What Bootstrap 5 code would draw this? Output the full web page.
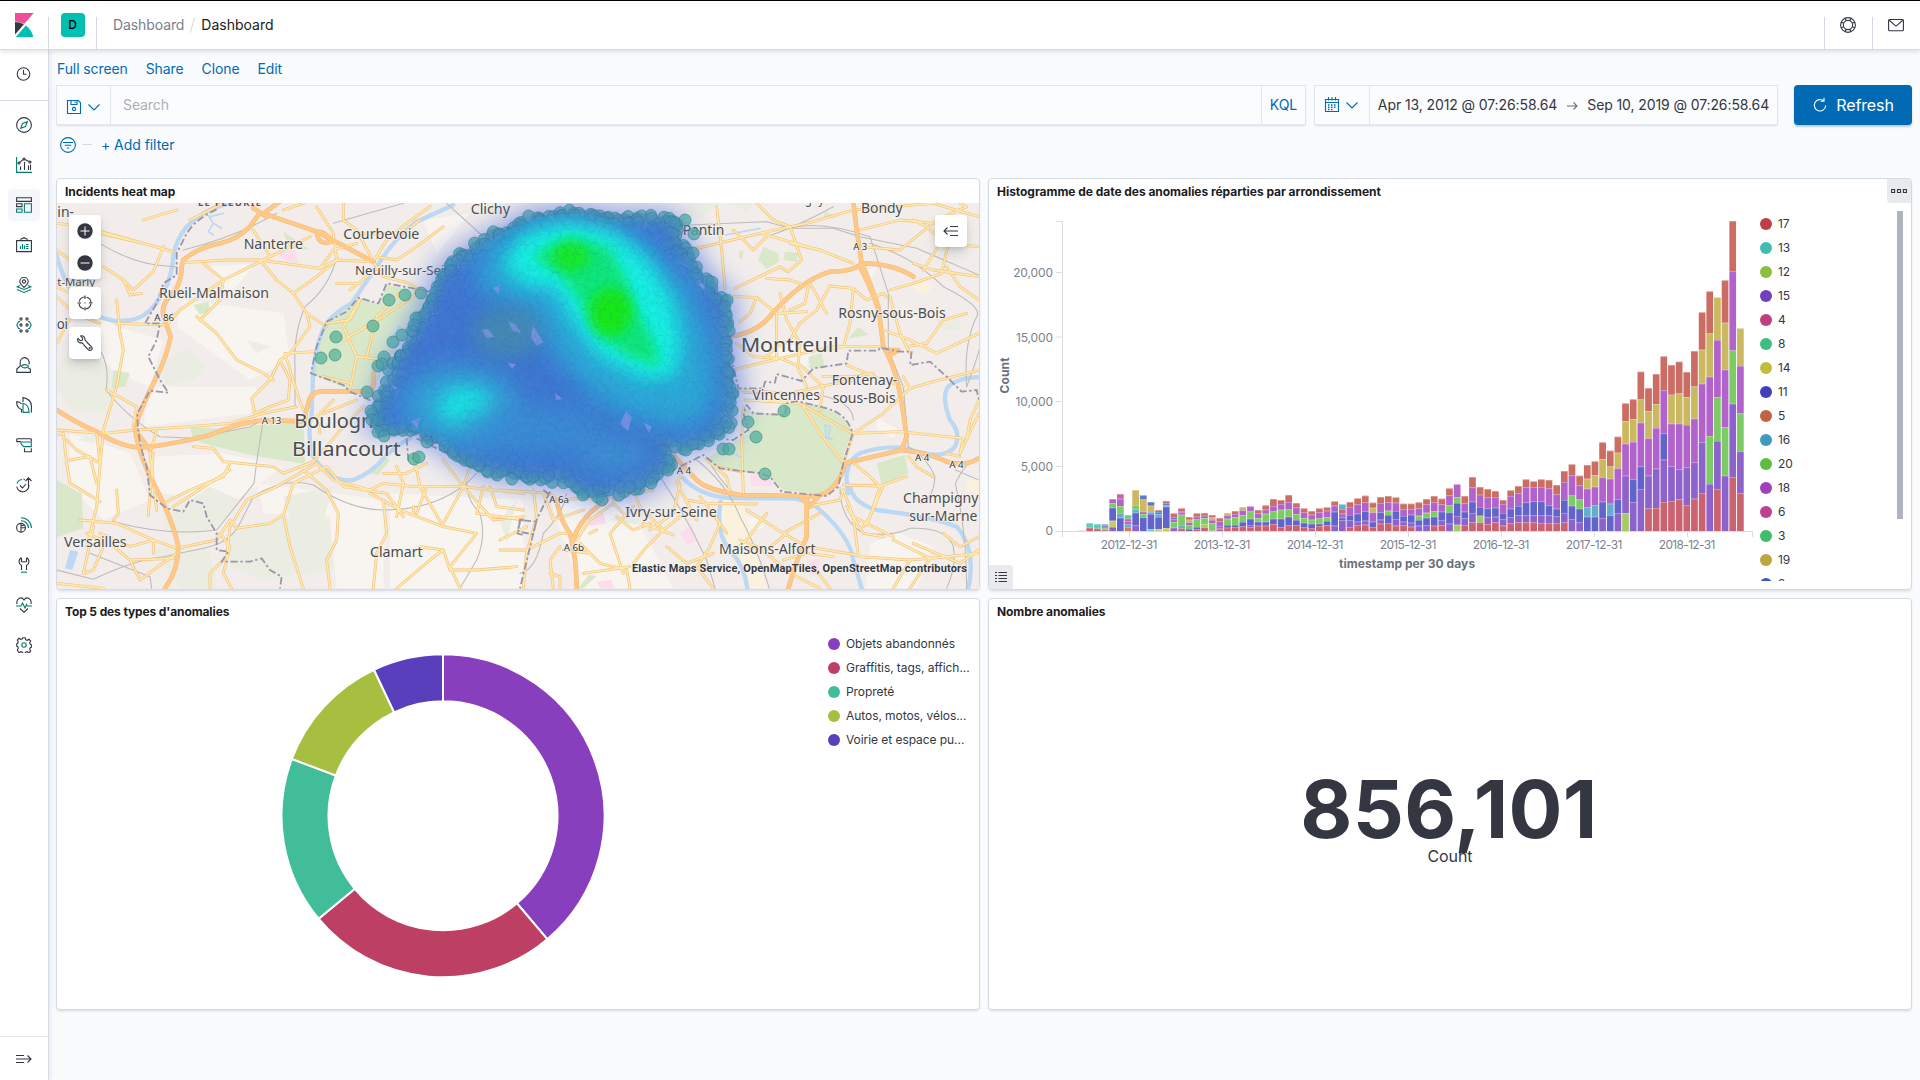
<!DOCTYPE html>
<html lang="en">
<head>
<meta charset="utf-8">
<title>Dashboard - Kibana</title>
<link href="https://cdn.jsdelivr.net/npm/bootstrap@5.3.0/dist/css/bootstrap.min.css" rel="stylesheet">
<style>
body{font-family:Inter,"Liberation Sans",sans-serif;font-size:14px;line-height:20px;color:#343741;background:#fafbfd;height:1080px;overflow:hidden;letter-spacing:-.1px}
a{text-decoration:none;color:#006bb4}
svg{display:block;flex:none}
.topbar{height:50px;border-top:1px solid #000;border-bottom:1px solid #d3dae6;box-shadow:0 2px 4px rgba(152,162,179,.28);z-index:3}
.topbar .cell{width:48px;height:48px;padding-bottom:1px}
.vline{width:1px;height:32px;background:#d3dae6;align-self:flex-end}
.avatar{width:24px;height:24px;border-radius:4px;background:#00bfb3;color:#000;font-size:12px;font-weight:500}
.crumb-sep{width:1px;height:16px;background:#d3dae6;transform:rotate(15deg);margin:0 8px}
.side{width:49px;border-right:1px solid #d3dae6;box-shadow:2px 0 5px rgba(152,162,179,.18);z-index:2}
.side-item{width:32px;height:32px;border-radius:4px}
.side .stack{padding-top:8px}
.side-item.current{background:#f5f7fa}
.ic{fill:none;stroke:#343741;stroke-width:1.1}
.ic .g{stroke:#017d73}
.blue{stroke:#006bb4}
.menu-row{height:38px;padding-left:1px;gap:18px}
.field{height:40px;background:#fbfcfd;border:1px solid #e1e5ee;box-shadow:0 2px 2px -1px rgba(152,162,179,.35)}
.field .sep{width:1px;background:#e3e7f0;align-self:stretch}
.refresh{width:118px;height:40px;background:#006bb4;border-radius:4px;font-size:16px;color:#fff;box-shadow:0 2px 2px rgba(54,97,126,.3)}
.filters{height:39px;padding:0 0 0 4px}
.panel{height:412px;border:1px solid #d3dae6;border-radius:4px;background:#fff;box-shadow:0 2px 3px -1px rgba(152,162,179,.4)}
.panel-name{height:24px;padding:0 8px;font-size:12px;font-weight:700;line-height:26px;color:#1a1c21;letter-spacing:-.08px}
.map-box{height:386px;overflow:hidden;border-radius:0 0 3px 3px}
.ctl{position:absolute;width:32px;background:#fff;border-radius:4px;box-shadow:0 6px 12px -1px rgba(65,78,101,.22),0 2px 4px -1px rgba(65,78,101,.2)}
.c-zoom{left:12px;top:12px;height:64px}.c-fit{left:12px;top:84px;height:32px}.c-tool{left:12px;top:124px;height:32px}.c-layer{right:12px;top:12px;height:32px}
.attrib{position:absolute;right:12px;bottom:11px;font-family:Roboto,Inter,sans-serif;font-size:11px;line-height:18px;font-weight:700;color:#343741;letter-spacing:.14px;text-shadow:0 0 2px #fff}
.corner{position:absolute;width:24px;height:24px;background:#e9eaed}
.c-menu{right:0;top:0;border-radius:0 3px 0 4px}.c-legend{left:0;bottom:0;border-radius:0 4px 0 3px}
.legend-list{font-size:12px;line-height:24px;letter-spacing:-.06px}
.dot{width:12px;height:12px;border-radius:50%;flex:none}
.hist-legend{width:130px;height:370px;overflow:hidden;margin-top:8px;padding-top:1px}
.scroller{width:6px;height:308px;background:#b0b4be;margin-top:8px}
.metric{font-size:80px;line-height:80px;padding-top:2px;margin-right:2px;font-weight:700;letter-spacing:.3px}
.metric-name{font-size:16px;line-height:20px;margin-top:-3px}
.tick{font:12px Inter,sans-serif;fill:#7b828f}
.axis-name{font:700 12px Inter,sans-serif;fill:#69707d}
.place{font-family:"Noto Sans",sans-serif;fill:#4a4c50;paint-order:stroke;stroke:#f7f3ee;stroke-width:5;stroke-linejoin:round}
</style>
<script src="https://cdn.jsdelivr.net/npm/bootstrap@5.3.0/dist/js/bootstrap.bundle.min.js"></script>
</head>
<body class="d-flex flex-column">
<header class="topbar bg-white d-flex align-items-center flex-shrink-0 position-relative">
  <div class="cell d-flex align-items-center justify-content-center">
    <svg width="24" height="24" viewBox="0 0 32 32"><path fill="#F04E98" d="M4 0v28.789L28.935.017z"/><path fill="#fff" d="M4 11.300c4.500 0 8.700 1.200 12.500 3.300L4 29z"/><path fill="#343741" d="M4 12v16.789l11.906-13.738A24.721 24.721 0 004 12"/><path fill="#00BFB3" d="M18.479 16.664L6.268 30.754l-1.073 1.237h23.191c-1.252-6.292-4.883-11.719-9.908-15.327"/></svg>
  </div>
  <span class="vline"></span>
  <div class="cell d-flex align-items-center justify-content-center" style="width:47px"><span class="avatar d-flex align-items-center justify-content-center">D</span></div>
  <span class="vline"></span>
  <nav class="d-flex align-items-center flex-grow-1 ps-3"><span style="color:#7a808c">Dashboard</span><span class="crumb-sep"></span><span style="color:#1a1c21;letter-spacing:0">Dashboard</span></nav>
  <span class="vline"></span>
  <div class="cell d-flex align-items-center justify-content-center" style="width:47px;padding-right:2px">
    <svg class="ic" width="16" height="16" viewBox="0 0 16 16"><circle cx="8" cy="8" r="7.400"/><circle cx="8" cy="8" r="4.600"/><path d="M5.200 1.200l1 2.600M10.800 1.200l-1 2.600M5.200 14.800l1-2.600M10.800 14.800l-1-2.600M1.200 5.200l2.600 1M1.200 10.800l2.600-1M14.800 5.200l-2.600 1M14.800 10.800l-2.600-1"/></svg>
  </div>
  <span class="vline"></span>
  <div class="cell d-flex align-items-center justify-content-center" style="width:47px;padding-right:2px">
    <svg class="ic" width="16" height="16" viewBox="0 0 16 16"><rect x=".6" y="2.500" width="14.800" height="11.200" rx="1"/><path d="M1 3l6 5.400a1.500 1.500 0 002 0L15 3"/></svg>
  </div>
</header>
<div class="d-flex flex-grow-1" style="min-height:0">
<aside class="side bg-white d-flex flex-column align-items-center flex-shrink-0 position-relative">
  <div class="side-item d-flex align-items-center justify-content-center" style="margin-top:8px"><svg class="ic" width="16" height="16" viewBox="0 0 16 16"><circle cx="7.500" cy="8" r="6.300"/><path d="M7.500 3.800v4.400h3"/></svg></div>
  <div class="w-100 border-bottom" style="height:11px;border-color:#d3dae6!important"></div>
  <div class="stack d-flex flex-column gap-2" id="apps"></div>
  <div class="mt-auto w-100 d-flex align-items-center justify-content-center border-top" style="height:44px;border-color:#e4e8f0!important"><svg class="ic" width="16" height="16" viewBox="0 0 16 16"><path d="M0 4.500h8M0 8h14.500M0 11.500h8M11.500 4.500L15 8l-3.500 3.500"/></svg></div>
</aside>
<main class="flex-grow-1" style="padding:0 8px 0 7px;min-width:0">
  <div class="menu-row d-flex align-items-center" style="margin-bottom:-3px"><a href="#">Full screen</a><a href="#">Share</a><a href="#">Clone</a><a href="#">Edit</a></div>
  <div class="d-flex">
    <div class="field d-flex align-items-center" style="width:1250px">
      <div class="d-flex align-items-center ps-2" style="width:53px"><svg class="ic blue" style="margin:3px 5px 0 1px" width="16" height="16" viewBox="0 0 16 16"><path d="M1.500 1.500h10.800l2.200 2.200v10.800h-13zM5 1.500v4h6v-4M9 2.500v1.500"/><circle cx="8" cy="10" r="1.600"/></svg><svg class="ic blue" style="margin-top:3px" width="14" height="14" viewBox="0 0 14 14"><path d="M1.500 4.500L7 10l5.500-5.500"/></svg></div>
      <span class="sep"></span><span class="flex-grow-1" style="padding-left:12px;color:#abb0ba">Search</span>
      <span class="sep"></span><a href="#" class="text-center" style="width:43px">KQL</a>
    </div>
    <div class="field d-flex align-items-center ms-2" style="width:464px">
      <div class="d-flex align-items-center" style="width:54px;padding-left:9px"><svg class="ic blue" style="margin-right:5px" width="16" height="16" viewBox="0 0 16 16"><path d="M1.500 2.500h13v12h-13zM1.500 5.500h13M4.500 0v3.500M8 0v3.500M11.500 0v3.500"/><path stroke-width="1.400" stroke-dasharray="1.500 1.500" d="M4 8h8.500M4 10.300h8.500M4 12.500h6"/></svg><svg class="ic blue" width="14" height="14" viewBox="0 0 14 14"><path d="M1.500 4.500L7 10l5.500-5.500"/></svg></div>
      <span class="sep"></span>
      <div class="d-flex flex-grow-1 align-items-center justify-content-center"><span>Apr 13, 2012 @ 07:26:58.64</span><svg class="ic" style="stroke:#69707d;margin:2px 9px 0" width="12" height="12" viewBox="0 0 12 12"><path d="M1 6h10M7.500 2.500L11 6 7.500 9.500"/></svg><span>Sep 10, 2019 @ 07:26:58.64</span></div>
    </div>
    <a href="#" class="refresh d-flex align-items-center justify-content-center ms-3"><svg class="ic me-2" style="stroke:#fff" width="16" height="16" viewBox="0 0 16 16"><path d="M11.800 4A5.700 5.700 0 1013.700 8.500M12 .8V4.200H8.600"/></svg>Refresh</a>
  </div>
  <div class="filters d-flex align-items-center" style="margin-bottom:14px"><svg class="ic blue" width="16" height="16" viewBox="0 0 16 16"><circle cx="8" cy="8" r="7.400"/><path d="M3 5.500h10M4.800 8.200h6.400M6.800 11h2.400"/></svg><span style="width:10px;height:1px;background:#d3dae6;margin:0 9px 0 6px"></span><a href="#" style="letter-spacing:-.05px">+ Add filter</a></div>

  <div class="row g-2">
    <div class="col-6"><section class="panel">
      <div class="panel-name">Incidents heat map</div>
      <div class="map-box position-relative">
        <svg id="map" width="922" height="386" viewBox="57 203 922 386"></svg>
        <div class="ctl c-zoom d-flex flex-column align-items-center justify-content-around"><svg width="16" height="16" viewBox="0 0 16 16"><circle cx="8" cy="8" r="7.700" fill="#343741"/><path stroke="#fff" d="M3.500 8h9M8 3.500v9"/></svg><svg width="16" height="16" viewBox="0 0 16 16"><circle cx="8" cy="8" r="7.700" fill="#343741"/><path stroke="#fff" d="M3.500 8h9"/></svg></div>
        <div class="ctl c-fit d-flex align-items-center justify-content-center"><svg class="ic" width="16" height="16" viewBox="0 0 16 16"><circle cx="8" cy="8" r="6" stroke-dasharray="7.400 2" stroke-dashoffset="-1"/><path d="M8 .5v3.500M8 12v3.500M.5 8H4M12 8h3.500"/><path d="M7.500 8h1"/></svg></div>
        <div class="ctl c-tool d-flex align-items-center justify-content-center"><svg class="ic" width="16" height="16" viewBox="0 0 16 16"><path d="M3.400.9l2.300 2.300-.5 2-2 .5L.9 3.400C0 6 2 8.400 4.700 7.700l2.300 2M7.700 4.700C8.400 2.500 6.300 0 3.400.9M7.700 4.700l2 2.300"/><path d="M9.700 7l4.800 4.800a2.100 2.100 0 01-3 3L6.800 10"/><circle cx="12.700" cy="13" r=".5"/></svg></div>
        <div class="ctl c-layer d-flex align-items-center justify-content-center"><svg class="ic" width="16" height="16" viewBox="0 0 16 16"><path d="M7 3.500h8M1 8h14M7 12.500h8M4.500 4.500L1 8l3.500 3.500"/></svg></div>
        <div class="attrib">Elastic Maps Service, OpenMapTiles, OpenStreetMap contributors</div>
      </div>
    </section></div>
    <div class="col-6"><section class="panel position-relative">
      <div class="panel-name" style="letter-spacing:-.04px">Histogramme de date des anomalies réparties par arrondissement</div>
      <div class="d-flex">
        <svg id="hist" width="771" height="386" viewBox="989 203 771 386"></svg>
        <div class="hist-legend legend-list" id="histLegend"></div>
        <div class="scroller" style="margin-left:7px"></div>
      </div>
      <div class="corner c-menu d-flex align-items-center justify-content-center"><svg class="ic" width="16" height="16" viewBox="0 0 16 16"><path d="M.6 6.500h3v3h-3zM6.500 6.500h3v3h-3zM12.400 6.500h3v3h-3z"/></svg></div>
      <div class="corner c-legend d-flex align-items-center justify-content-center"><svg class="ic" width="14" height="14" viewBox="0 0 14 14"><path d="M1 2.500h2M4.500 2.500H13M1 5.500h2M4.500 5.500H13M1 8.500h2M4.500 8.500H13M1 11.500h2M4.500 11.500H13"/></svg></div>
    </section></div>
    <div class="col-6"><section class="panel">
      <div class="panel-name" style="letter-spacing:-.12px">Top 5 des types d'anomalies</div>
      <div class="d-flex">
        <svg id="donut" width="771" height="386" viewBox="57 623 771 386"></svg>
        <div class="legend-list" id="pieLegend" style="margin-top:9px"></div>
      </div>
    </section></div>
    <div class="col-6"><section class="panel">
      <div class="panel-name">Nombre anomalies</div>
      <div class="d-flex flex-column align-items-center justify-content-center" style="height:386px"><div class="metric">856,101</div><div class="metric-name">Count</div></div>
    </section></div>
  </div>
</main>
</div>
<script>
/* ---- sidebar application icons ---- */
const apps=[
'<circle cx="8" cy="8" r="7.400"/><path class="g" d="M11.300 4.700L9.500 9.500 4.700 11.300 6.500 6.500zM8 8l.1.100"/>',
'<path class="g" d="M.6 0v15.400H16"/><path d="M4.500 13V9.500M8.500 13V5M12.500 13V8.500M14.500 13V7.500M3.800 5.400L7 2.700M9 2.600l4 2"/><circle cx="3" cy="6" r="1"/><circle cx="8" cy="2" r="1"/><circle cx="14" cy="5" r="1"/>',
'<path d="M.6.8h14.800v3.600H.6zM.6 6.800h5.400v2.800H.6z"/><path class="g" d="M.6 12h5.400v3.200H.6zM8.400 6.800h7v8.400h-7z"/>',
'<path d="M.6 3.600h14.800v11H.6zM5 3.500V2l3-1.300L11 2v1.500"/><path class="g" d="M4.500 12V9M6.500 12V7M8.500 12V8.500M10 7.500h2.500M10 9.500h2.500M10 11.500h2.500"/>',
'<path d="M8 10.500C5.500 8 3.800 6.500 3.800 4.500a4.200 4.200 0 018.400 0c0 2-1.700 3.500-4.200 6z"/><circle cx="8" cy="4.500" r="1.600"/><path class="g" d="M4 8.500L1 9.800l7 2.700 7-2.700-3-1.300M1 12.600l7 2.800 7-2.800"/>',
'<circle cx="5" cy="2" r="1.100"/><circle cx="11" cy="2" r="1.100"/><circle cx="5" cy="8" r="1.100"/><circle cx="11" cy="8" r="1.100"/><circle cx="5" cy="14" r="1.100"/><circle cx="11" cy="14" r="1.100"/><path class="g" d="M4 4.500H2.500L.8 8l1.700 3.500H4M12 4.500h1.500L15.200 8l-1.700 3.500H12"/>',
'<path d="M13 7.500C14 3 11 .6 8.500.6S3.700 3 4.200 6.500V9L.8 12v3.400h13.600v-3.200l-2.200-1.400"/><path class="g" d="M5.500 9.500C6 7 11 7 12.500 9.300 11 11.300 7 11.500 5.500 9.500z"/>',
'<path d="M.6 4.600c2.500 0 4 1 5 2.400M.6 4.600C.6 9 2 11.500 5.500 12.500v3M7 5V.6c5 1 8.400 3.400 8.400 8.400v6.400"/><path class="g" d="M7 6.200c4 1 6 4 6 9.200H7z"/>',
'<path d="M.8 1.800h14.500M.8 1.800v2.800h4M15.300 1.800v2.800M8.500 11.200v3.500h6.800v-3.500"/><path class="g" d="M5 5h10.300v4.600H7.800L5 6.800z"/>',
'<path d="M12.500 1v10.500M9.500 4L12.500.8 15.500 4M12.800 8a6 6 0 01-12 1.500M4 8.500l2.500 2.500 3.500-4"/><path class="g" d="M1 6.500a6 6 0 015-4M7.500 2.400l1.500.2"/>',
'<circle cx="5" cy="10.800" r="4.400"/><path d="M5 6.400v8.800M5 10.800h4.300M5 8.500h3.600"/><path class="g" d="M5 .7A10.300 10.300 0 0115.400 11M5 3.700A7.300 7.300 0 0112.500 11"/>',
'<path d="M5.500.8C2 2.500 2.500 7 5.500 8.500V13M10.500.8C14 2.500 13.500 7 10.500 8.500V13M5.500.8v4h5v-4"/><path class="g" d="M5 15.200h6"/>',
'<path d="M1 7C-.2 1.500 5.500-1 8 3c2.500-4 8.200-1.500 7 4M4 11.500l4 3.700 4-3.700"/><path class="g" d="M0 9h5l1.500-3 2.500 5 1.500-3.500.8 1.500H16"/>',
'<path d="M6.800.7h2.400l.5 2 1.500.6 1.800-1 1.700 1.700-1 1.800.6 1.500 1.100.5v2.400l-1.100.5-.6 1.500 1 1.800-1.700 1.700-1.800-1-1.500.6-.5 1H6.800l-.5-1-1.500-.6-1.800 1L1.300 13l1-1.800-.6-1.500-1-.5V6.800l1-.5.6-1.500-1-1.800L3 1.300l1.800 1 1.500-.6z"/><circle class="g" cx="8" cy="8" r="2.200"/>'];
document.getElementById('apps').innerHTML=apps.map((p,i)=>`<div class="side-item d-flex align-items-center justify-content-center${i==2?' current':''}"><svg class="ic" width="16" height="16" viewBox="0 0 16 16">${p}</svg></div>`).join('');

/* ---- legends ---- */
const legendRow=(c,t)=>`<div class="d-flex align-items-center"><span class="dot" style="background:${c};margin-right:6px"></span>${t}</div>`;
document.getElementById('histLegend').innerHTML=[['#bd4049',17],['#40bdb0',13],['#8cbf40',12],['#7040bd',15],['#bd407c',4],['#40bd80',8],['#bdbd40',14],['#4040bd',11],['#bd6440',5],['#409abd',16],['#5dbd40',20],['#9f40bd',18],['#bd4093',6],['#40bd68',3],['#bda540',19],['#4058bd',2]].map(x=>legendRow(...x)).join('');
document.getElementById('pieLegend').innerHTML=[['#883fbd','Objets abandonnés'],['#bd4064','Graffitis, tags, affich...'],['#41be99','Propreté'],['#a6bf40','Autos, motos, vélos...'],['#5a3fbd','Voirie et espace pu...']].map(x=>legendRow(...x)).join('');

/* ---- stacked histogram, segment heights in thirds of a pixel ---- */
const pal={r:'#cb6270',o:'#cb6d63',y:'#cbb962',Y:'#cbcb62',p:'#8c62cb',b:'#6264cb',m:'#b162cb',g:'#7dcb65',t:'#62cbbb',c:'#62aecb',n:'#cb8062',k:'#cb62a6',e:'#62cb8c',B:'#6275cb',L:'#a4cb62',x:'#dedcd8'};
const bars=`x3|r10t14|r7t14|r4g6p6c5|p12Y19b39g14m12|b40c14g21m22k14|n12c8m9k8e11|p17b38c10g13y45|b41g10m7y37B12|t6b45c6y19B11|Y6b36c9B6o6|Y9b64c5B5o7|p10g17m8B6o12|r8c10g31m7k4o8|b6g12m8y8o8|r6b6g23m8o10|r11L10g18m7o8|r2g22m9y8o7|p5r4b4m16o10|r10b8g19m10y7|r12b6g24m9o9|r14b13g21m14y10|r12p6b19g22m15|r16b12g11m14o10|r16b12g24m12o13|r21b16g22m16o21|r12b25g27m17o12|r17b26g22m22o21|r18b15g18m20o13|r12b13g14m17o12|r8b14g12m15o11|r15b7g16m18o12|r17b13g12m19o10|p16b42m18o13|p32b8m12o14c14|r12p20b16m24o15|r18p10b24m28o18|r19p12b28m27o20|r12b16m28y14o15|r22p12b22m28o18|r24b24g13m25o19|r16p20b24m25o16|r17p11b17m20o17|r13p12b24m17o16|p16b17g13m22o18|p17b23g15m25o16|r16b27g17m26o19|r17p15b26m22o17|p22b34g21m30o21|L19p26b39g18m38|r18p20b20m25o22|r26p28b34m43o31|r26L20b26m37o23|r21p21b26m33o25|r26p17b27m32o18|r16p19b19m27o12|r23p18b26m38o17|r26p21b28m38o22|r26p21b39m45o24|r26p21b42m43o17|r24p23b42m43o23|r24p23b30m51o25|r24p20b23m43o28|r26p28b39m54o33|p35b41g31m60o33|p26b41g28m42o29|b43c29m55y30o41|b43c35m55y35o41|p39b49m73y55o50|b47c35m75y37o47|p53b42m93y47o48|L54p112m96y68o53|p86b69m112y69o59|p126b68m131y70o83|r68p98m112y82o69|r69p118m122y72o90|r87p127b79m129o102|r90p104m128y87o89|r95p90m137y91o95|r77p114m127y84o75|r97p109m131y97o106|r114p152m176y102o112|p141g144m178y130o126|r126p144g132m171y128|p166g146m172y141o127|r162p220g160m237o151|r113p126g114m142y113`.split('|');
let h='';
bars.forEach((s,i)=>{let y=531,x=1078.7+7.655*i;
  for(const [,c,v] of s.matchAll(/([a-zA-Z])(\d+)/g)){const hh=v/3;y-=hh;h+=`<rect x="${x.toFixed(2)}" y="${y.toFixed(2)}" width="6.700" height="${hh.toFixed(2)}" fill="${pal[c]}"/><rect x="${(x-.3).toFixed(2)}" y="${y.toFixed(2)}" width="7.300" height=".8" fill="#fff" opacity=".35"/>`}});
h+='<path d="M1056 221.500h6.500V537M1056 272.500h6.500M1056 337h6.500M1056 401.500h6.500M1056 466.500h6.500M1056 531.500h696.500V537" fill="none" stroke="#dcdcdc"/>';
[[272.500,'20,000'],[337.300,'15,000'],[401.300,'10,000'],[466.300,'5,000'],[530.500,'0']].forEach(([y,t])=>h+=`<text class="tick" x="1053" y="${y+4.300}" text-anchor="end">${t}</text>`);
for(let k=0;k<7;k++){const x=1129.5+93*k;h+=`<path d="M${x} 531v6" stroke="#dcdcdc"/><text class="tick" x="${x-.5}" y="548.600" text-anchor="middle" textLength="56.500">${2012+k}-12-31</text>`}
h+='<text class="axis-name" x="1407" y="568" text-anchor="middle" textLength="136">timestamp per 30 days</text><text class="axis-name" transform="translate(1009 375.500) rotate(-90)" text-anchor="middle" textLength="36">Count</text>';
document.getElementById('hist').innerHTML=h;

/* ---- donut ---- */
const cuts=[0,139.8,230.4,290.6,334.7,360],pc=['#883fbd','#bd4064','#41be99','#a6bf40','#5a3fbd'];
const pt=(a,r)=>{a=a*Math.PI/180;return (443+r*Math.sin(a)).toFixed(2)+' '+(815.8-r*Math.cos(a)).toFixed(2)};
document.getElementById('donut').innerHTML=pc.map((c,i)=>`<path fill="${c}" stroke="#fff" stroke-width="2" d="M${pt(cuts[i],161.5)}A161.500 161.500 0 0 1 ${pt(cuts[i+1],161.5)}L${pt(cuts[i+1],114.5)}A114.500 114.500 0 0 0 ${pt(cuts[i],114.5)}Z"/>`).join('');

/* ---- map: west and east sheets share a scale of three units per pixel ---- */
let seed=7;const rnd=()=>(seed=(seed*16807)%2147483647)/2147483647;
const west={
 pale:['M60 300L200 380 340 420 300 560 200 520 60 420Z','M400 300L700 340 720 480 600 540 380 380Z','M300 560L620 560 600 640 280 680Z','M60 700L240 760 300 900 160 960 60 860Z','M300 770L520 760 700 800 560 900 320 880Z','M620 850L1000 900 1000 1165 860 1165 840 950 640 940Z','M1020 880L1420 900 1420 1165 1020 1165Z','M1120 60L1260 40 1160 160Z','M470 200L620 190 540 280Z'],
 moss:['M335 490L410 445 465 500 430 540 345 555Z','M20 500L80 430 180 500 200 560 160 640 60 630 20 560Z','M540 1000L700 960 840 960 850 1110 640 1140 540 1100Z','M340 950L480 860 570 900 500 980 400 1010 340 990Z','M300 1040L480 1050 500 1165 390 1165Z','M700 890L850 860 820 960 720 960Z','M80 720L150 700 130 730Z','M590 420L660 440 620 460Z'],
 park:['M1010 255L1120 275 1140 330 1060 420 1000 500 965 595 900 570 790 525 795 460 830 370 925 295 985 312Z','M420 680L560 690 650 670 760 665 765 792 600 765 480 735 430 720Z','M20 840L95 880 100 985 20 1012Z','M190 510L240 520 225 560 185 565Z','M430 315L475 305 480 330 450 345Z','M700 95L780 150 715 140Z','M950 820L1000 770 1020 780 985 825Z'],
 pink:['M680 155L735 150 745 190 700 180Z'],
 lake:['M60 1050l25 5-18 55-22-5zM1010 440l35-65 10 5-35 60z'],
 water:['M545 10Q470 20 410 80 370 130 368 190 360 260 310 320 270 370 190 362 100 345 60 270 30 210 15 150','M1210 15L1100 65Q1040 110 1000 170L905 310Q830 350 815 400 790 460 788 560L785 640Q770 700 790 770 840 850 910 840 970 815 1000 775 1040 735 1080 715'],
 creek:['M470 40L490 70 475 95 490 105M490 70L515 85M480 50L520 40'],
 rail:['M150 130Q260 200 380 200','M20 1110L130 1138Q250 1080 340 1070L460 1045Q540 1030 570 970L610 890Q700 830 790 855 900 930 1000 930 1180 930 1280 820','M150 450Q180 500 168 570 240 660 330 710L430 715 600 680 640 660M640 660Q620 780 612 850 540 940 500 990 360 1010 190 965','M860 170Q840 260 765 320 730 400 735 500L735 620','M400 150Q560 110 680 40','M1190 10L1300 110 1420 200','M850 70L1060 10M1290 940Q1310 1010 1280 1080L1230 1165M1250 850Q1250 900 1290 940M120 1060L300 1130 305 1165'],
 hw:['M690 5L640 40 800 95 970 185','M625 45L600 80Q560 120 510 130 440 145 400 180L395 200Q395 260 350 300 330 330 345 360L362 410Q350 470 320 530 275 620 255 680 260 740 300 830 370 960 385 1040 385 1110 345 1165','M610 25L650 50M800 95Q805 140 845 125 830 95 800 95','M20 630Q80 670 140 695 220 745 280 742 360 735 480 705 560 670 640 660L765 664Q765 640 775 610 780 580 810 574L960 574Q975 560 970 520','M255 690L300 750'],
 st:['M20 70L100 80 370 155M150 100L280 130 370 155','M400 188L530 180 630 180 810 205 860 180 960 185','M390 330L520 240 640 180 700 150 780 110','M450 360L510 300 520 240 460 190','M630 180L680 240 730 280 770 340 780 380 720 460 690 480 660 540 605 595 615 640','M440 350L500 400 560 480 640 520 670 540','M20 690L160 700 260 690 420 680 540 670 640 640 740 620','M690 480L720 540 715 600 660 620 615 640M705 460L745 590 760 630','M710 460L790 455M730 280L800 230 860 180 850 100 800 20','M200 370L350 375 390 330M200 300L210 400 220 450 200 560 160 690 150 800 140 920 110 1040','M160 200L220 240 250 270 310 215 340 140M220 240L240 285 275 280','M170 570L260 620 250 680M20 290L70 340 150 370M20 430L80 320','M20 705L40 700 50 790 60 850 150 905M50 720L80 750 150 790 140 700 M60 780L120 770 140 850','M90 960L200 970 310 1020 380 1045 500 1020 540 960 560 985 660 970 700 945 730 850 830 800','M320 930L300 760 320 690M295 945L310 760M200 870L205 940 190 960','M340 910L420 870 520 830 540 790M430 740L490 745 520 785 670 800 700 820 790 785','M370 920L540 810M545 1165L520 1120 540 1040 510 1000','M700 945L720 1040 760 1165M480 1165L480 1120 530 1070 540 980M540 980L590 900 680 860 800 790','M760 810L830 870 865 940 860 1020 830 1080 840 1165M830 800L880 860 1010 880 1060 950M1000 900L1010 1000 980 1060 970 1165','M800 790L850 840 960 870 1000 850 1090 860 1240 860 1420 880','M830 370L900 360 930 300 880 380 920 470 900 570M1110 275L1000 350 880 420M1050 280L980 350 950 470M820 530L900 550M920 470L1010 480','M940 620L880 680 830 740 790 785M960 580L1000 620 1010 660M850 600L800 650 810 700M820 640L920 600','M970 185L1010 120 1070 70 1140 20M970 185L1000 230 1080 250 1150 300M970 185L920 90 880 60 880 10M930 100L1060 100 1110 60M980 170L1040 180 1100 140 1180 80','M900 270L950 230 990 200M770 340L830 380M860 250L930 250M810 205L850 150 920 130','M1040 800L1060 850 1040 950M1090 760L1110 860 1180 980M1000 820L1070 820 1130 790M1130 860L1100 940M1180 780L1240 860 1180 970M1260 800L1240 860 1330 960 1420 950M1300 860L1280 940 1420 960','M960 880L1050 930 1180 980 1280 1000 1200 1100 1230 1165M1040 1165L1140 1080 1180 1050 1110 1040M1180 1050L1200 1110 1280 1110 1400 1100M1320 860L1340 920 1420 930M1090 920v25','M20 1150L160 1165M130 980L100 1120 130 1110 160 1040 200 1020M110 1000L180 1030 240 1080 370 1075M240 1080L270 1140 380 1060M150 1000L240 1040 310 1020 310 1060','M20 150L60 180M20 260L60 280M380 30L280 60M520 10L420 60M610 90L660 170M700 30L760 10'],
 edge:['M500 28Q430 60 405 110L380 160V225L340 250 320 310 285 370H330L320 420 295 470 330 540 355 578 300 572 262 640Q262 720 290 800L300 885 350 925 400 935 420 900 460 910 470 950 500 1000V1050L535 1055 515 1085H600L635 1075 660 1110 695 1130 690 1165','M1140 275L1010 250 985 310 925 293 890 335 830 365 800 440 783 520 880 555 900 575 970 605','M1070 715L1075 780 1100 770M1100 715L1160 745 1250 790 1420 840','M1420 960H1410L1402 1000 1420 1005']
};
const east={
 pale:['M150 900L380 900 520 1165 240 1165Z','M800 430L940 440 920 500 800 480Z','M1130 650L1195 690 1180 715 1130 690Z','M1130 200L1100 265 1080 220Z','M0 950L60 900 60 1165 0 1165Z','M740 950L790 960 790 985 750 990Z','M1110 1030L1200 1000 1300 1040 1250 1165 1100 1165Z','M860 615L900 620 890 655 855 650Z'],
 moss:['M560 10L660 10 600 60 570 45Z','M1305 360L1375 340 1385 390 1330 390Z','M0 960L50 900 20 1030Z','M330 960L410 930 420 975Z','M680 10L760 10 740 35Z'],
 park:['M730 620L760 640 850 640 870 603 940 612Q1040 640 1058 700 1020 780 1030 790L1010 860 960 885 850 870 800 820 670 810 620 775 745 700Z','M1130 790L1215 765 1225 820 1145 855Z','M925 470L965 460 975 505 930 505Z','M1045 415L1075 382 1107 405Z','M790 140L835 160 838 185 800 207 775 180Z','M855 155L895 158 890 185 850 180Z','M265 1125L290 1128 250 1165 235 1165Z','M975 35L1000 45 1000 55 970 50Z','M720 150l12 5-8 25-8-10z'],
 pink:['M750 825L805 820 820 858 755 858Z','M262 955L310 940 318 970 270 978Z','M540 1000L575 975 592 1025 560 1035Z','M290 1145L335 1140 342 1165 300 1165Z','M925 1085L960 1075 955 1115 930 1130Z'],
 sand:['M670 900L725 895 800 1165 745 1165 700 1060 660 980Z','M1235 260L1265 235 1300 260 1270 285Z','M1400 840L1437 835V880L1400 875Z','M1210 320L1240 330 1250 365 1200 350Z'],
 water:['M550 835Q600 890 700 895L860 895Q925 895 960 930 1050 1010 1060 1080L1085 1165','M662 905Q645 1000 690 1050 735 1100 742 1165','M1045 880Q1025 790 1080 760 1150 735 1220 745 1330 785 1365 740 1385 700 1350 660 1320 580 1350 555 1390 530 1437 532','M1050 860Q1060 910 1130 930 1300 950 1370 980 1430 1050 1405 1165'],
 creek:['M675 105L780 85M975 675l15 5-5 30 12 8-18-3z M690 755l30 15'],
 rail:['M570 75L800 65 870 85H1000L1080 110 1250 145 1437 225','M870 85Q960 60 1110 110L1165 280 1165 450 1210 560 1225 740Q1280 770 1305 830 1300 900 1260 910','M480 830Q560 950 620 1080L645 1165M590 780Q680 850 720 950 770 1040 808 1165M620 770Q650 830 700 880','M1110 130Q1240 170 1330 260 1450 320 1430 350 1390 430 1400 560','M730 580H930Q1060 600 1060 660','M1020 860Q1020 960 1090 1000 1180 1010 1230 985 1340 980 1360 1040 1370 1100 1340 1165M1400 560Q1430 480 1437 450','M200 880Q190 940 130 1000 110 1110 60 1120M1366 850Q1400 780 1437 770M1366 850Q1400 1000 1400 1165M1000 20Q890 80 800 110M1366 810L1437 840'],
 hw:['M1060 5L1070 90 1085 190Q1100 220 1135 320L1150 440Q1190 500 1210 640L1220 710 1205 750Q1120 770 1035 790 1025 840 990 870 960 895 900 888L720 885Q620 870 590 840L500 745','M690 410Q760 400 800 360 900 240 990 215 1060 215 1085 190 1180 190 1240 230','M1205 750Q1290 760 1340 785 1400 800 1437 775','M920 890V1010Q890 1080 865 1165M905 895L930 920 955 890','M170 900Q180 960 210 1000 230 1080 230 1165M220 1020Q240 950 320 900','M1160 450L1195 450 1165 470','M1080 200Q1130 300 1140 350'],
 st:['M570 150L780 100 940 65 1060 30M770 10L820 60 870 80 905 180 865 215 840 200 705 265','M650 20L665 150 675 265M700 290L770 292 830 340 920 335','M770 292L750 340 720 365M800 235L870 240 925 260 915 310 870 330M840 280L860 360 900 430 895 490 970 560 960 630','M990 258L1060 265 1100 300 1150 280 1160 290','M990 258L950 330 900 370 870 420 830 440 800 470M1060 265L1050 370 1030 440 960 450','M780 100L960 150 1060 190M1060 30L1300 10 1437 50M1080 90L1200 60 1300 70','M1085 140L1200 150 1310 60 1400 20 1380 10M1310 60L1345 130 1325 220 1240 250 1170 270','M1240 190L1300 210 1437 230M1340 200L1380 260 1437 300M1270 210L1320 130','M1150 390L1230 420 1310 460 1437 400M1170 290L1200 400 1230 460M1220 440L1280 430 1330 360 1400 340','M700 510L840 475 1000 440 1140 440M830 340L830 480M710 430L760 470 840 475M840 475L890 495 920 560','M1230 565L1300 545 1437 510M1210 530L1230 565 1150 640 1060 700 1030 790M1040 495L1150 540 1210 560M970 530L1060 530 1120 520','M720 570L870 580 960 560 1060 540M735 600L900 610 1058 700M910 620L960 700 1030 790M730 620L725 720 730 880M780 600L870 605','M1060 700L1200 695 1390 715 1380 760M1050 780L1110 830 1140 860 1110 950 1090 980M1150 855L1100 975M1030 855L1140 858 1220 830','M1225 770L1250 800 1300 830M1437 600L1410 660 1400 720M1437 640L1380 760','M1030 870L1060 950 1075 1070 1230 1080 1290 1075 1230 1165M1060 950L1180 1010M1240 1030L1380 1090 1437 1050M1180 1020L1290 1075 1437 1060M1330 1000L1380 1040 1437 1010M1180 1165L1230 1080','M1040 920L1090 1000 1150 1010M920 920L1020 900 1030 870M860 1000L800 1050 720 1020M740 930L850 1000 920 1040M800 940L740 1020 690 1060M850 1000L960 940','M920 1040L1070 1065M870 1120L960 1165M940 1100L990 1165M800 1060L870 1120M850 1080L920 1060 1000 1070','M0 870L150 880 170 900 330 890 460 870M100 870L110 950 80 1060 70 1165M130 880L160 960 250 930','M0 1050L80 1050 180 1000 210 1000M240 1030L300 1090 380 1110 390 1165M0 1020L80 980M250 1120L390 1100','M340 900L400 870 420 920 490 990M400 920L330 1000 370 1120M350 950L400 990 450 970M450 990L520 940 540 850M540 950L490 990 440 1040 400 1090','M430 970L520 1005M560 900L620 910 770 912M600 890L660 970 630 1040 590 1100 640 1165M640 940L680 1000M500 1040L560 1090 640 1060','M180 1040L150 1080 160 1165M190 1050L270 1060M150 1120L180 1130 180 1165M230 1020L270 960 340 910 380 950M270 1000L290 990','M740 1050L770 1040 800 1060M560 790L530 850 590 960M650 800L720 815M620 780L680 830 690 880','M700 90L760 150 800 110M870 130L960 150M1240 60L1280 80M930 250L980 340M1340 760L1380 770M1290 90L1330 120M1330 130L1437 140'],
 edge:['M692 330L695 480 715 565H790L795 545 825 548 830 522 905 543 940 505 1040 490 1045 452H1135L1140 443 1200 455H1235L1230 495 1290 485 1340 530 1385 575 1430 570 1437 600','M540 800L610 765 660 805 780 820 810 830 845 875 980 888 1015 860 1030 790 1058 700Q1040 640 980 625L890 603 860 610 855 645 760 640 740 615 730 640 745 690 700 720 675 718','M150 875L110 960 100 1000 60 1165','M60 960L55 995 100 1003 108 965Z','M130 870L150 885']
};
const layer=(list,attr)=>(list||[]).map(d=>`<path d="${d}" ${attr}/>`).join('');
const sheets=[['translate(50 200) scale(.33333)',west],['translate(500 200) scale(.33333)',east]];
const each=f=>sheets.map(([t,s])=>`<g transform="${t}" fill="none" stroke-linejoin="round" stroke-linecap="round">${f(s)}</g>`).join('');
let m=`<defs>${[3,6,9,13,20].map(b=>`<filter id="b${b}" x="-60%" y="-60%" width="220%" height="220%"><feGaussianBlur stdDeviation="${b}"/></filter>`).join('')}</defs><rect x="57" y="203" width="922" height="386" fill="#f2edea"/>`;
m+=each(s=>layer(s.pale,'fill="#f8f4f0"')+layer(s.moss,'fill="#ebede3"')+layer(s.sand,'fill="#fbf2de"')+layer(s.park,'fill="#d9e8c9"')+layer(s.pink,'fill="#fddcec"')+layer(s.lake,'fill="#bdd8f3"'));
m+=each(s=>layer(s.water,'stroke="#bdd8f3" stroke-width="13"')+layer(s.creek,'stroke="#bdd8f3" stroke-width="5"')+layer(s.rail,'stroke="#bdbbb9" stroke-width="3.200"'));
m+=each(s=>layer(s.st,'stroke="#f0c088" stroke-width="8.500"')+layer(s.hw,'stroke="#f5b878" stroke-width="14"'));
m+=each(s=>layer(s.st,'stroke="#ffeaa6" stroke-width="4.800"')+layer(s.hw,'stroke="#fec886" stroke-width="11"')+layer(s.edge,'stroke="#9a97aa" stroke-width="5.500" stroke-linecap="butt" stroke-dasharray="22 8 7 8"'));
/* place labels: sheet, x, baseline, width (0 = natural), size, text */
const L=[[0,581,147,178,41,'Nanterre'],[0,880,118,228,41,'Courbevoie'],[0,1262,41,118,41,'Clichy'],[0,915,224,0,40,'Neuilly-sur-Seine'],[0,327,293,330,41,'Rueil-Malmaison'],[0,22,52,50,41,'in-'],[0,22,257,113,34,'t-Marly'],[0,20,388,34,41,'oi'],[0,733,685,0,60,'Boulogne-'],[0,726,767,326,62,'Billancourt'],[0,42,1040,188,41,'Versailles'],[0,960,1072,158,41,'Clamart'],[1,1083,38,125,41,'Bondy'],[1,548,104,125,41,'Pantin'],[1,845,10,127,41,'Bobigny'],[1,1015,355,322,41,'Rosny-sous-Bois'],[1,722,457,294,62,'Montreuil'],[1,995,556,197,41,'Fontenay-'],[1,998,608,189,41,'sous-Bois'],[1,757,599,203,41,'Vincennes'],[1,376,952,274,41,'Ivry-sur-Seine'],[1,657,1063,290,41,'Maisons-Alfort'],[1,1209,910,240,41,'Champigny-'],[1,1228,964,204,41,'sur-Marne'],
[0,313,364,59,27,'A 86'],[0,635,671,59,27,'A 13'],[1,1060,149,42,27,'A 3'],[1,530,822,43,27,'A 4'],[1,1245,782,43,27,'A 4'],[1,1348,804,43,27,'A 4'],[1,148,908,59,27,'A 6a'],[1,191,1053,61,27,'A 6b']];
m+=[0,1].map(k=>`<g transform="${sheets[k][0]}">${L.filter(l=>l[0]==k).map(([,x,y,w,s,t])=>`<text class="place" x="${x}" y="${y}" font-size="${s}"${w?` textLength="${w}" lengthAdjust="spacingAndGlyphs"`:''}${s<30?' style="fill:#333"':''}>${t}</text>`).join('')}</g>`).join('');
m+='<text x="198" y="205.500" font-family="Noto Sans" font-weight="700" font-size="9.500" textLength="63" fill="#7d4a4a">LE FLEURIE</text>';

/* incident points */
const P=[[525,219],[563,214],[587,213],[610,220],[637,218],[658,220],[670,220],[678,224],[674,230],[672,239],[684,250],[694,264],[698,278],[712,287],[725,302],[726,333],[728,367],[732,397],[728,420],[716,435],[700,443],[685,446],[658,441],[671,465],[655,477],[627,490],[602,495],[582,490],[567,479],[537,479],[510,474],[483,468],[460,456],[432,436],[407,428],[380,431],[374,412],[388,390],[392,367],[405,350],[421,320],[431,300],[441,275],[454,261],[472,250],[492,238],[517,225]];
const inside=(x,y)=>{let c=false;for(let i=0,j=P.length-1;i<P.length;j=i++){const [a,b]=P[i],[d,e]=P[j];if((b>y)!=(e>y)&&x<(d-a)*(y-b)/(e-b)+a)c=!c}return c};
const pts=[];
for(let i=0;i<P.length;i++){const [a,b]=P[i],[c,d]=P[(i+1)%P.length],n=Math.ceil(Math.hypot(c-a,d-b)/6);for(let k=0;k<n;k++)pts.push([a+(c-a)*k/n+rnd()*8-4,b+(d-b)*k/n+rnd()*8-4])}
for(let y=212;y<500;y+=7)for(let x=370;x<740;x+=7){const a=x+rnd()*8-4,b=y+rnd()*8-4;if(inside(a,b))pts.push([a,b])}
[[389,300],[405,295],[421,293],[373,326],[336,337],[335,355],[321,358],[393,342],[402,335],[384,357],[378,366],[382,364],[367,392],[414,459],[419,457],[784,411],[748,422],[756,437],[723,449],[729,449],[765,474],[583,495],[602,500],[512,479],[651,483],[668,470],[686,450],[712,282],[694,234],[693,253],[685,220],[371,411],[372,420],[378,432],[384,436],[427,442],[416,318],[414,325]].forEach(p=>pts.push(p));
const circ=a=>pts.map(([x,y])=>`<circle cx="${x.toFixed(1)}" cy="${y.toFixed(1)}" r="6" ${a}/>`).join('');
/* density surface */
const poly=P.map(p=>p.join(',')).join(' ');
const grow=k=>P.map(([x,y])=>[(555+(x-555)*k).toFixed(1),(348+(y-348)*k).toFixed(1)].join(',')).join(' ');
m+=circ('fill="#54b399" fill-opacity=".75" stroke="#3d9381" stroke-opacity=".8" stroke-width=".8"');
m+=`<polygon points="${grow(1.07)}" fill="#4169e1" opacity=".6" filter="url(#b13)"/>
<clipPath id="cl"><polygon points="${poly}"/></clipPath>
<polygon points="${grow(.95)}" fill="#4074d4" opacity=".9" filter="url(#b6)"/>
<g clip-path="url(#cl)">
<path d="M474 262L500 235 555 218 640 236 692 290 712 345 716 405 690 430 645 422 600 404 555 355 530 310 485 295Z" fill="#2ba8d8" filter="url(#b13)"/>
<path d="M508 260L528 236 570 226 612 235 644 262 668 300 677 340 672 372 645 376 602 354 578 322 558 286 520 278Z" fill="#12f0e2" stroke="#12f0e2" stroke-width="8" filter="url(#b9)"/>
<path d="M538 257L568 240 606 250 622 278 634 310 652 346 655 362 628 352 598 330 582 298 562 271Z" fill="#10e97a" stroke="#10e97a" stroke-width="7" filter="url(#b6)"/>
<ellipse cx="571" cy="257" rx="19" ry="14" fill="#13ea28" filter="url(#b6)"/><ellipse cx="611" cy="312" rx="21" ry="24" fill="#13ea18" filter="url(#b6)"/>
<ellipse cx="460" cy="405" rx="58" ry="38" fill="#30a5d8" filter="url(#b13)"/><ellipse cx="466" cy="408" rx="27" ry="20" fill="#14eae2" filter="url(#b9)"/>
<ellipse cx="612" cy="455" rx="38" ry="16" fill="#3c94d4" filter="url(#b13)"/><ellipse cx="530" cy="430" rx="76" ry="26" fill="#3b8fd4" opacity=".85" filter="url(#b13)"/>
<ellipse cx="507" cy="332" rx="34" ry="26" fill="#448db0" opacity=".85" filter="url(#b9)"/>
</g>
<path fill="#8b96ea" opacity=".7" d="M493 288l7-3-1 9zM508 321l8 4 5 8-8-2zM533 325l10 17-6 4-6-8zM508 363l8 1-4 5zM482 330l6-1 6 8-8 1zM620 424l6-13 6 6-4 14zM643 422l9 5-3 6zM555 393l8 6-7 1zM411 421l9-3-3 11z"/>`;
m+=circ('fill="none" stroke="#285f9a" stroke-opacity=".09" stroke-width=".7"');
document.getElementById('map').innerHTML=m;
</script>
</body>
</html>
